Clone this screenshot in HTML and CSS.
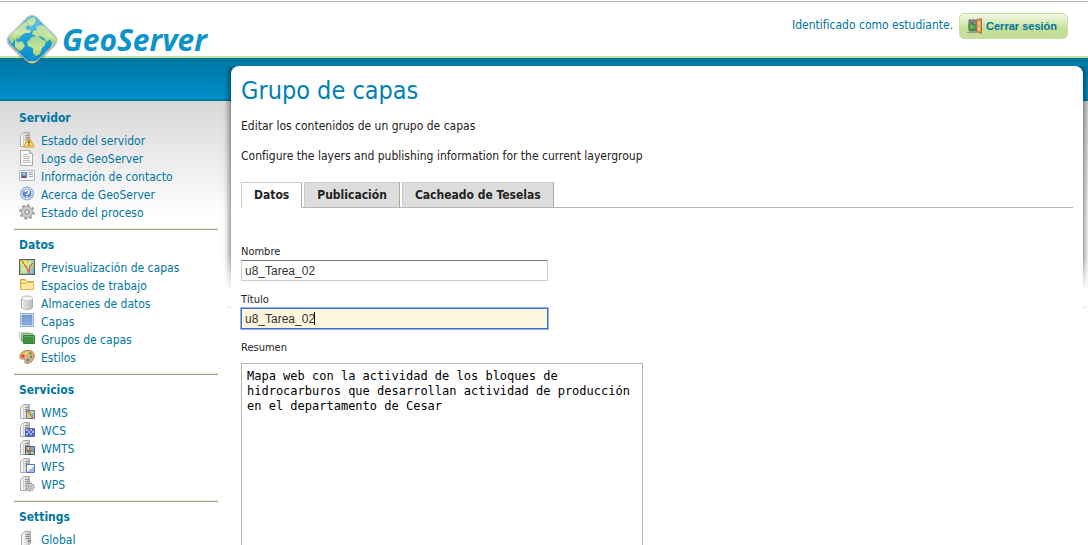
FILE: index.html
```html
<!DOCTYPE html>
<html lang="es">
<head>
<meta charset="utf-8">
<title>GeoServer: Grupo de capas</title>
<link rel="stylesheet" href="styles.css">
</head>
<body>
<svg class="sprite" aria-hidden="true">
  <defs>
    <linearGradient id="metal"><stop offset="0" stop-color="#fff"/><stop offset=".45" stop-color="#e4e4e4"/><stop offset="1" stop-color="#bbb"/></linearGradient>
    <linearGradient id="sky" x2="0" y2="1"><stop stop-color="#35b2e2"/><stop offset="1" stop-color="#078dc8"/></linearGradient>
    <linearGradient id="land" x2="0" y2="1"><stop stop-color="#a5d392"/><stop offset=".6" stop-color="#c6e39a"/><stop offset="1" stop-color="#a8d25c"/></linearGradient>
    <linearGradient id="layer" x2="0" y2="1"><stop stop-color="#7499d2"/><stop offset="1" stop-color="#8eb0e4"/></linearGradient>
  </defs>
  <symbol id="tower" viewBox="0 0 16 16"><path d="M1.500 3.500 4.500.5h6v12l-3 2h-6z" fill="url(#metal)" stroke="#aaa"/><path d="M4.500 2.500v11" stroke="#ccc"/><path d="M6 3.500h4M6 5.500h4M6 7.500h4" stroke="#999"/></symbol>
  <symbol id="status" viewBox="0 0 16 16"><use href="#tower"/><path d="m10 5.500 5.300 9.500H4.700z" fill="#ffd66b" stroke="#d6952b" stroke-linejoin="round"/><path d="M10 8.500v3M10 12.500v1.300" stroke="#5a3c0d" stroke-width="1.300"/></symbol>
  <symbol id="page" viewBox="0 0 16 16"><path d="M1.500.5h9l3 3v12h-12z" fill="#fafafa" stroke="#aaa"/><path d="M10.500.5v3h3" fill="#ddd" stroke="#aaa"/><path d="M4 4.500h5M4 6.500h7M4 8.500h7M4 10.500h7M4 12.500h7" stroke="#bbb"/></symbol>
  <symbol id="card" viewBox="0 0 16 16"><path d="M.5 2.500h15v10H.5z" fill="#f5f8fb" stroke="#b5bcc5"/><path d="M2 4h6v6H2z" fill="#4d8edb"/><circle cx="5" cy="6" r="1.500" fill="#f5c18b"/><path d="M3 10c0-3 4-3 4 0z" fill="#a34a26"/><path d="M10 4.500h4M10 6.500h4M10 8.500h4" stroke="#8ba5c4"/></symbol>
  <symbol id="help" viewBox="0 0 16 16"><circle cx="8" cy="7.500" r="6.500" fill="#b9cce8" stroke="#8ba4cb"/><circle cx="8" cy="7.500" r="5" fill="#5f8aca" stroke="#e9f1fb"/><path d="M6 6c.2-2.500 4.200-2.200 4 .2C9.800 7.500 8 7.500 8 9M8 10v1.500" fill="none" stroke="#fff" stroke-width="1.500"/></symbol>
  <symbol id="gear" viewBox="0 0 16 16"><circle cx="8" cy="8" r="6.600" fill="none" stroke="#999" stroke-width="2.200" stroke-dasharray="2.600 2.580"/><circle cx="8" cy="8" r="4" fill="none" stroke="#999" stroke-width="4"/><circle cx="8" cy="8" r="4" fill="none" stroke="#ccc" stroke-width="2.600"/><circle cx="8" cy="8" r="1.800" fill="#f5f5f5" stroke="#999"/></symbol>
  <symbol id="map" viewBox="0 0 16 16"><path d="M1 1h14v14H1z" fill="#bfe095"/><path d="M1 1h6v5H1z" fill="#fbe36a"/><path d="M8 13c2-5 4-5 7-5v7H8z" fill="#7cbbe8"/><path d="M1 5h14M1 10h14M5 1v14M11 1v14" stroke="#e8f3c5" stroke-width=".7"/><path d="m3 2 4 6 3 5 1-6 3-3" fill="none" stroke="#e45a2c" stroke-width="1.300"/><path d="M.6.6h14.800v14.800H.6z" fill="none" stroke="#5c645f" stroke-width="1.200"/></symbol>
  <symbol id="folder" viewBox="0 0 16 16"><path d="M1.500 12.500v-10h5l1 2h7v8z" fill="#f8d269" stroke="#dca742"/><path d="M2 6.500h5l1-1h6.500v7h-13z" fill="#ffe79b" stroke="#e6b957"/><path d="M3 4.500h4" stroke="#fff7cf"/></symbol>
  <symbol id="database" viewBox="0 0 16 16"><path d="M2.500 3.500v8.500c0 3 11 3 11 0V3.500" fill="url(#metal)" stroke="#aaa"/><ellipse cx="8" cy="3.500" rx="5.500" ry="2.500" fill="#f4f4f4" stroke="#bbb"/><path d="M5 7v5M7 7.500v5M9 7.500v5M11 7v5" stroke="#bbb" stroke-width=".7"/></symbol>
  <symbol id="square" viewBox="0 0 16 16"><path d="M1.500.5h13v13h-13z" fill="#fff" stroke="#91afd9"/><path d="M3 2h10v10H3z" fill="url(#layer)" stroke="#6388c4" stroke-width=".7"/></symbol>
  <symbol id="layers" viewBox="0 0 16 16"><path d="M.5 1.500h10v7H.5z" fill="#e4f0e4" stroke="#c9dac9"/><path d="M2.500 2.500h11v8h-11z" fill="#9cc39c" stroke="#7fb07f"/><path d="M4.500 4.500h11v8h-11z" fill="#3f9140" stroke="#3b7f3f"/><path d="M5.500 5.500h9v6" fill="none" stroke="#66a866"/></symbol>
  <symbol id="palette" viewBox="0 0 16 16"><path d="M1 9C0 4 5 1 10 1.500c5 0 6.500 5 4 9-2 4-7 5-8 3-.5-2 1-3-1-3.500C3 9.500 2 11 1 9z" fill="#e2b07b" stroke="#b57d4e"/><circle cx="4" cy="7" r="1.500" fill="#d53b29"/><circle cx="7" cy="4" r="1.400" fill="#f4dd50"/><circle cx="11.500" cy="4.500" r="1.400" fill="#6aad57"/><circle cx="12" cy="8" r="1.300" fill="#4f9650"/><circle cx="9" cy="11" r="1.600" fill="#4c7fcd"/></symbol>
  <symbol id="wms" viewBox="0 0 16 16"><use href="#tower"/><path d="M7.500 6.500h8v8h-8z" fill="#bcd987" stroke="#6a74ba"/><path d="M8 7h3v3H8z" fill="#f6c94c"/><path d="m9 7 5 7" stroke="#e66b35" stroke-width="1.500"/><path d="M12 10h3v2h-3z" fill="#70a7dd"/></symbol>
  <symbol id="wcs" viewBox="0 0 16 16"><use href="#tower"/><path d="M6.500 6.500h9v8h-9z" fill="#4d65c0" stroke="#5f68b4"/><path d="M7 7h2v2H7zm4 0h2v2h-2zM9 9h2v2H9zm4 0h2v2h-2zM7 11h2v2H7zm4 0h2v2h-2z" fill="#a8bdf0"/></symbol>
  <symbol id="wmts" viewBox="0 0 16 16"><use href="#tower"/><path d="M6.500 6.500h9v8h-9z" fill="#b6d97e" stroke="#4f559e"/><path d="M7 7h4v3H7z" fill="#f6bd41"/><path d="M12 7h3v3h-3z" fill="#75a8e5"/><path d="m7 7 3 7" stroke="#e46b37"/><path d="M11 7v8M7 11h8" stroke="#4a5190"/></symbol>
  <symbol id="wfs" viewBox="0 0 16 16"><use href="#tower"/><path d="M7.500 6.500h8v8h-8z" fill="#fff" stroke="#5b73be"/><path d="m8 14 7-6v6z" fill="#9dbce8"/></symbol>
  <symbol id="wps" viewBox="0 0 16 16"><use href="#tower"/><use href="#gear" x="6" y="6" width="10" height="10"/></symbol>
  <symbol id="server" viewBox="0 0 16 16"><path d="m2.500 3.500 3-3h6v12l-3 2h-6z" fill="url(#metal)" stroke="#aaa"/><path d="M6.500 3.500h4M6.500 5.500h4M6.500 7.500h4" stroke="#888"/><path d="M9 9h2v2H9z" fill="#5ba84d"/></symbol>
  <symbol id="exit" viewBox="0 0 16 16"><path d="M2 2h8v11H2z" fill="#888" stroke="#666"/><path d="M0 14.500h10" stroke="#999"/><path d="M1 8.500 5.500 4.500v2.500H9v4H5.500v2z" fill="#65b95b" stroke="#26792e"/><path d="m9.500 2 5-1.500v15l-5-2z" fill="#dda162" stroke="#a8713e"/><path d="m11 4 2-.7v4L11 7zm0 5 2 .3V13l-2-.8z" fill="#efc48e"/></symbol>
</svg>

<header class="header">
  <a class="logo" href="#">
    <svg class="globe" viewBox="0 0 52 54" aria-hidden="true">
      <defs><clipPath id="globe-clip"><path d="M22 4q4-3 8 0l18 18q4 4 0 9L31 48q-5 4-10 0L4 31q-4-5 0-9z"/></clipPath></defs>
      <path class="globe-edge" d="M22 4q4-3 8 0l18 18q4 4 0 9L31 48q-5 4-10 0L4 31q-4-5 0-9z" fill="url(#sky)" stroke="#a9c9cf"/>
      <g clip-path="url(#globe-clip)" fill="url(#land)">
        <path d="m5 21 12-11 5-2 1 4-4 2 2 3 4 0-1 3-5 0-4 3-2 3-2-1-1 3-4-3-3 1z"/>
        <path d="m21 7 6-3 3 2-1 4-4 4-2-2z"/>
        <path d="m26 21 1-3 4-1-1-3 4-2 5 1 7 8 5 5-2 6-3-2-2-4-3 3-3-4-4-2-3 1-3-2z"/>
        <path d="m26 24 6-1 5 4 3 1-1 4-3 3-2 6-4 2-3-3 0-5-5-2-1-4z"/>
        <path d="m9 27 3 2 4-1 3 5-3 4-3 1-4-4z"/>
        <path d="m2 24 4-2 2 5-2 4zM46 30l3 2-3 4-1-3zM19 49l3-1 7 0 4-1-5 6h-6z"/>
      </g>
      <path d="M22 5q4-3 8 0l18 18-4 1Q26 12 8 25l-4-2z" fill="#fff" opacity=".18"/>
    </svg>
    <span class="brand">GeoServer</span>
  </a>
  <div class="session">
    <span>Identificado como estudiante.</span>
    <button class="logout" type="button"><svg class="icon"><use href="#exit"/></svg>Cerrar sesión</button>
  </div>
</header>

<div class="page">
  <nav class="sidebar">
    <section class="group">
      <h2>Servidor</h2>
      <ul>
        <li><a href="#"><svg class="icon"><use href="#status"/></svg>Estado del servidor</a></li>
        <li><a href="#"><svg class="icon"><use href="#page"/></svg>Logs de GeoServer</a></li>
        <li><a href="#"><svg class="icon"><use href="#card"/></svg>Información de contacto</a></li>
        <li><a href="#"><svg class="icon"><use href="#help"/></svg>Acerca de GeoServer</a></li>
        <li><a href="#"><svg class="icon"><use href="#gear"/></svg>Estado del proceso</a></li>
      </ul>
    </section>
    <section class="group">
      <h2>Datos</h2>
      <ul>
        <li><a href="#"><svg class="icon"><use href="#map"/></svg>Previsualización de capas</a></li>
        <li><a href="#"><svg class="icon"><use href="#folder"/></svg>Espacios de trabajo</a></li>
        <li><a href="#"><svg class="icon"><use href="#database"/></svg>Almacenes de datos</a></li>
        <li><a href="#"><svg class="icon"><use href="#square"/></svg>Capas</a></li>
        <li><a href="#"><svg class="icon"><use href="#layers"/></svg>Grupos de capas</a></li>
        <li><a href="#"><svg class="icon"><use href="#palette"/></svg>Estilos</a></li>
      </ul>
    </section>
    <section class="group">
      <h2>Servicios</h2>
      <ul>
        <li><a href="#"><svg class="icon"><use href="#wms"/></svg>WMS</a></li>
        <li><a href="#"><svg class="icon"><use href="#wcs"/></svg>WCS</a></li>
        <li><a href="#"><svg class="icon"><use href="#wmts"/></svg>WMTS</a></li>
        <li><a href="#"><svg class="icon"><use href="#wfs"/></svg>WFS</a></li>
        <li><a href="#"><svg class="icon"><use href="#wps"/></svg>WPS</a></li>
      </ul>
    </section>
    <section class="group">
      <h2>Settings</h2>
      <ul>
        <li><a href="#"><svg class="icon"><use href="#server"/></svg>Global</a></li>
      </ul>
    </section>
  </nav>

  <main class="main">
    <div class="panel">
      <h1>Grupo de capas</h1>
      <p>Editar los contenidos de un grupo de capas</p>
      <p>Configure the layers and publishing information for the current layergroup</p>
      <div class="tabs" role="tablist">
        <button class="tab tab-active" type="button" role="tab" aria-selected="true">Datos</button>
        <button class="tab" type="button" role="tab" aria-selected="false">Publicación</button>
        <button class="tab" type="button" role="tab" aria-selected="false">Cacheado de Teselas</button>
      </div>
      <form class="form">
        <div class="field">
          <label for="name">Nombre</label>
          <input id="name" class="text" type="text" value="u8_Tarea_02">
        </div>
        <div class="field">
          <label for="title">Título</label>
          <div class="entry">
            <input id="title" class="text text-focus" type="text" value="u8_Tarea_02">
            <span class="caret"></span>
          </div>
        </div>
        <div class="field field-area">
          <label for="abstract">Resumen</label>
          <textarea id="abstract" spellcheck="false">Mapa web con la actividad de los bloques de hidrocarburos que desarrollan actividad de producción en el departamento de Cesar</textarea>
        </div>
      </form>
    </div>
  </main>
</div>
</body>
</html>
```

FILE: styles.css
```css
* { box-sizing: border-box; }

body {
  display: flex;
  flex-direction: column;
  height: 100vh;
  margin: 0;
  overflow: hidden;
  background: #fff;
  color: #222;
  font: 12px/15px Tahoma, "DejaVu Sans Condensed", "DejaVu Sans", sans-serif;
}

.sprite {
  position: absolute;
  width: 0;
  height: 0;
}

.icon {
  flex: none;
  width: 16px;
  height: 16px;
}

h1, h2, p, ul { margin: 0; padding: 0; }
ul { list-style: none; }
a { color: #0076a1; text-decoration: none; }

.header {
  display: flex;
  flex: none;
  justify-content: space-between;
  align-items: flex-start;
  height: 58px;
  padding: 0 20px 0 6px;
  border-top: 1px solid #fff;
  border-bottom: 2px solid #c8e09b;
  box-shadow: inset 0 1px #b5b5b5;
}

.logo {
  display: flex;
  position: relative;
  z-index: 1;
  gap: 4px;
  padding-top: 12px;
}

.globe {
  width: 52px;
  height: 54px;
}

.globe-edge { filter: drop-shadow(0 1px 1px #667); }

.brand {
  padding-top: 8px;
  color: #0c93cb;
  font: italic 700 30px/38px "Open Sans", "Noto Sans", sans-serif;
}

.session {
  display: flex;
  gap: 6px;
  padding-top: 12px;
  color: #0076a1;
  line-height: 24px;
}

.logout {
  display: flex;
  align-items: center;
  gap: 3px;
  height: 26px;
  padding: 0 10px 0 7px;
  border: 1px solid #c5e09a;
  border-radius: 5px;
  background: linear-gradient(#f3f9e8, #c5df98 60%);
  color: #0076a1;
  font: 700 11px/22px "Liberation Sans", Arial, sans-serif;
}

.page {
  display: flex;
  flex: 1;
  min-height: 0;
  background:
    linear-gradient(#0076a1, #0090ca 41px, #0076a1 41px) top / 100% 43px no-repeat,
    linear-gradient(#d8d8d8 43px, #fff 160px);
}

.sidebar {
  flex: none;
  width: 231px;
  padding: 45px 13px 0 14px;
}

.group {
  padding: 6px 5px 7px;
  border-bottom: 1px solid #98a68a;
  box-shadow: inset 0 -1px #e6f0da;
}

.group h2 {
  margin-bottom: 5px;
  color: #0076a1;
  font-size: 12px;
  line-height: 18px;
}

.group a {
  display: flex;
  gap: 6px;
  line-height: 18px;
}

.main {
  display: flex;
  flex: 1;
  position: relative;
  min-width: 0;
  padding: 8px 5px 0 0;
}

.main::before {
  content: "";
  position: absolute;
  inset: 8px 5px auto 0;
  height: 240px;
  border-radius: 8px;
  box-shadow: 0 0 7px 1px rgba(0, 0, 0, .6);
  mask: linear-gradient(#000 190px, transparent 225px) 0 0 / 100% 100% no-clip;
}

.panel {
  position: relative;
  flex: 1;
  min-width: 0;
  padding: 10px;
  overflow: hidden;
  border-radius: 8px 8px 0 0;
  background: #fff;
}

.panel h1 {
  margin-bottom: 13px;
  color: #0080b6;
  font-size: 25px;
  font-weight: 400;
  line-height: 30px;
}

.panel p { margin-bottom: 15px; }

.tabs {
  display: flex;
  gap: 2px;
  margin-top: 18px;
  border-bottom: 1px solid #b5b5b5;
}

.tab {
  height: 26px;
  margin-bottom: -1px;
  padding: 0 12px;
  border: 1px solid #ccc;
  border-right: 1px solid #aaa;
  border-bottom-color: #b5b5b5;
  background: #ddd;
  color: #222;
  font: inherit;
  font-weight: 700;
}

.tab-active {
  border-bottom-color: #fff;
  background: #fff;
}

.form {
  display: flex;
  flex-direction: column;
  gap: 11px;
  padding-top: 36px;
}

.field {
  display: flex;
  flex-direction: column;
  align-items: flex-start;
  gap: 1px;
  font-size: 11px;
}

.field-area { gap: 8px; }

.entry { position: relative; }

.text {
  display: block;
  width: 307px;
  height: 21px;
  padding: 1px 3px;
  border: 1px solid #ccc;
  border-top-color: #777;
  outline: 0;
  background: #fff;
  color: #333;
  font: 12px "Liberation Sans", Arial, sans-serif;
}

.text-focus {
  border-color: #456fb8;
  background: #fdf6dc;
  box-shadow: 0 0 0 1px #8db4f5;
}

.caret {
  position: absolute;
  top: 4px;
  left: 73px;
  width: 1px;
  height: 13px;
  background: #000;
}

textarea {
  width: 402px;
  height: 220px;
  padding: 5px;
  border: 1px solid #b5b5b5;
  outline: 0;
  resize: none;
  background: #fff;
  color: #000;
  font: 12px/15px Consolas, "DejaVu Sans Mono", monospace;
}
```
